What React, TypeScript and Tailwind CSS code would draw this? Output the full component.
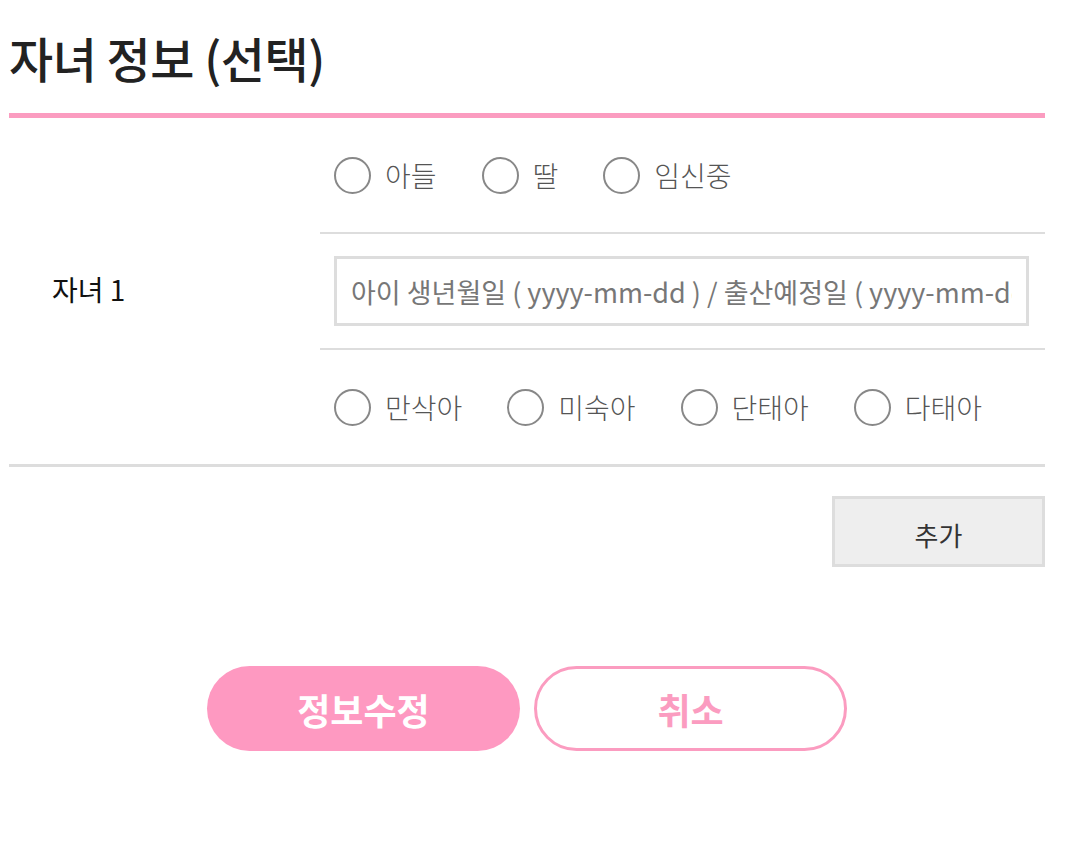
import React from "react";

const FONT = { fontFamily: '"Noto Sans CJK KR", "Noto Sans", sans-serif' };

const Radio = ({ name, label }: { name: string; label: string }) => (
  <label className="flex items-center mr-[45px] cursor-pointer">
    <input
      type="radio"
      name={name}
      className="appearance-none w-[37px] h-[37px] rounded-full border-2 border-[#888] bg-white m-0"
    />
    <span className="ml-[14px] text-[28px] font-light text-[#555] leading-none">{label}</span>
  </label>
);

export default function App() {
  return (
    <div className="bg-white min-h-[864px] w-[1067px]" style={FONT}>
      <div className="w-[1036px] ml-[9px]">
        {/* Title */}
        <div className="h-[118px] border-b-[5px] border-[#fb9cc0] flex items-start">
          <h2 className="mt-[25px] text-[48px] font-medium text-[#222] tracking-[-0.5px] leading-[64px]">
            자녀 정보 (선택)
          </h2>
        </div>

        {/* Children table */}
        <div className="grid grid-cols-[311px_1fr] border-b-[3px] border-[#ddd]">
          <div className="flex items-center pl-[43px] text-[28px] text-[#111] pb-[4px]">자녀 1</div>
          <div className="flex flex-col">
            <div className="h-[116px] border-b-2 border-[#ddd] flex items-center pl-[14px]">
              <Radio name="gender" label="아들" />
              <Radio name="gender" label="딸" />
              <Radio name="gender" label="임신중" />
            </div>
            <div className="h-[116px] border-b-2 border-[#ddd] flex items-center pl-[14px] pr-[16px]">
              <input
                type="text"
                placeholder="아이 생년월일 ( yyyy-mm-dd ) / 출산예정일 ( yyyy-mm-dd )"
                className="w-full h-[70px] border-[3px] border-[#ddd] px-[14px] text-[27px] text-[#333] placeholder:text-[#777] outline-none"
                style={FONT}
              />
            </div>
            <div className="h-[114px] flex items-center pl-[14px]">
              <Radio name="birth" label="만삭아" />
              <Radio name="birth" label="미숙아" />
              <Radio name="birth" label="단태아" />
              <Radio name="birth" label="다태아" />
            </div>
          </div>
        </div>

        {/* Add */}
        <div className="flex justify-end mt-[29px]">
          <button
            className="w-[213px] h-[71px] border-[3px] border-[#ddd] bg-[#eee] text-[26px] text-[#333] pt-[6px]"
            style={FONT}
          >
            추가
          </button>
        </div>

        {/* Actions */}
        <div className="flex justify-center gap-[14px] mt-[99px]">
          <button
            className="w-[313px] h-[85px] rounded-full bg-[#fe99c1] text-white text-[36px] font-bold"
            style={FONT}
          >
            정보수정
          </button>
          <button
            className="w-[313px] h-[85px] rounded-full border-[3px] border-[#fb9cc0] bg-white text-[#fb9cc0] text-[36px] font-bold"
            style={FONT}
          >
            취소
          </button>
        </div>
      </div>
    </div>
  );
}
